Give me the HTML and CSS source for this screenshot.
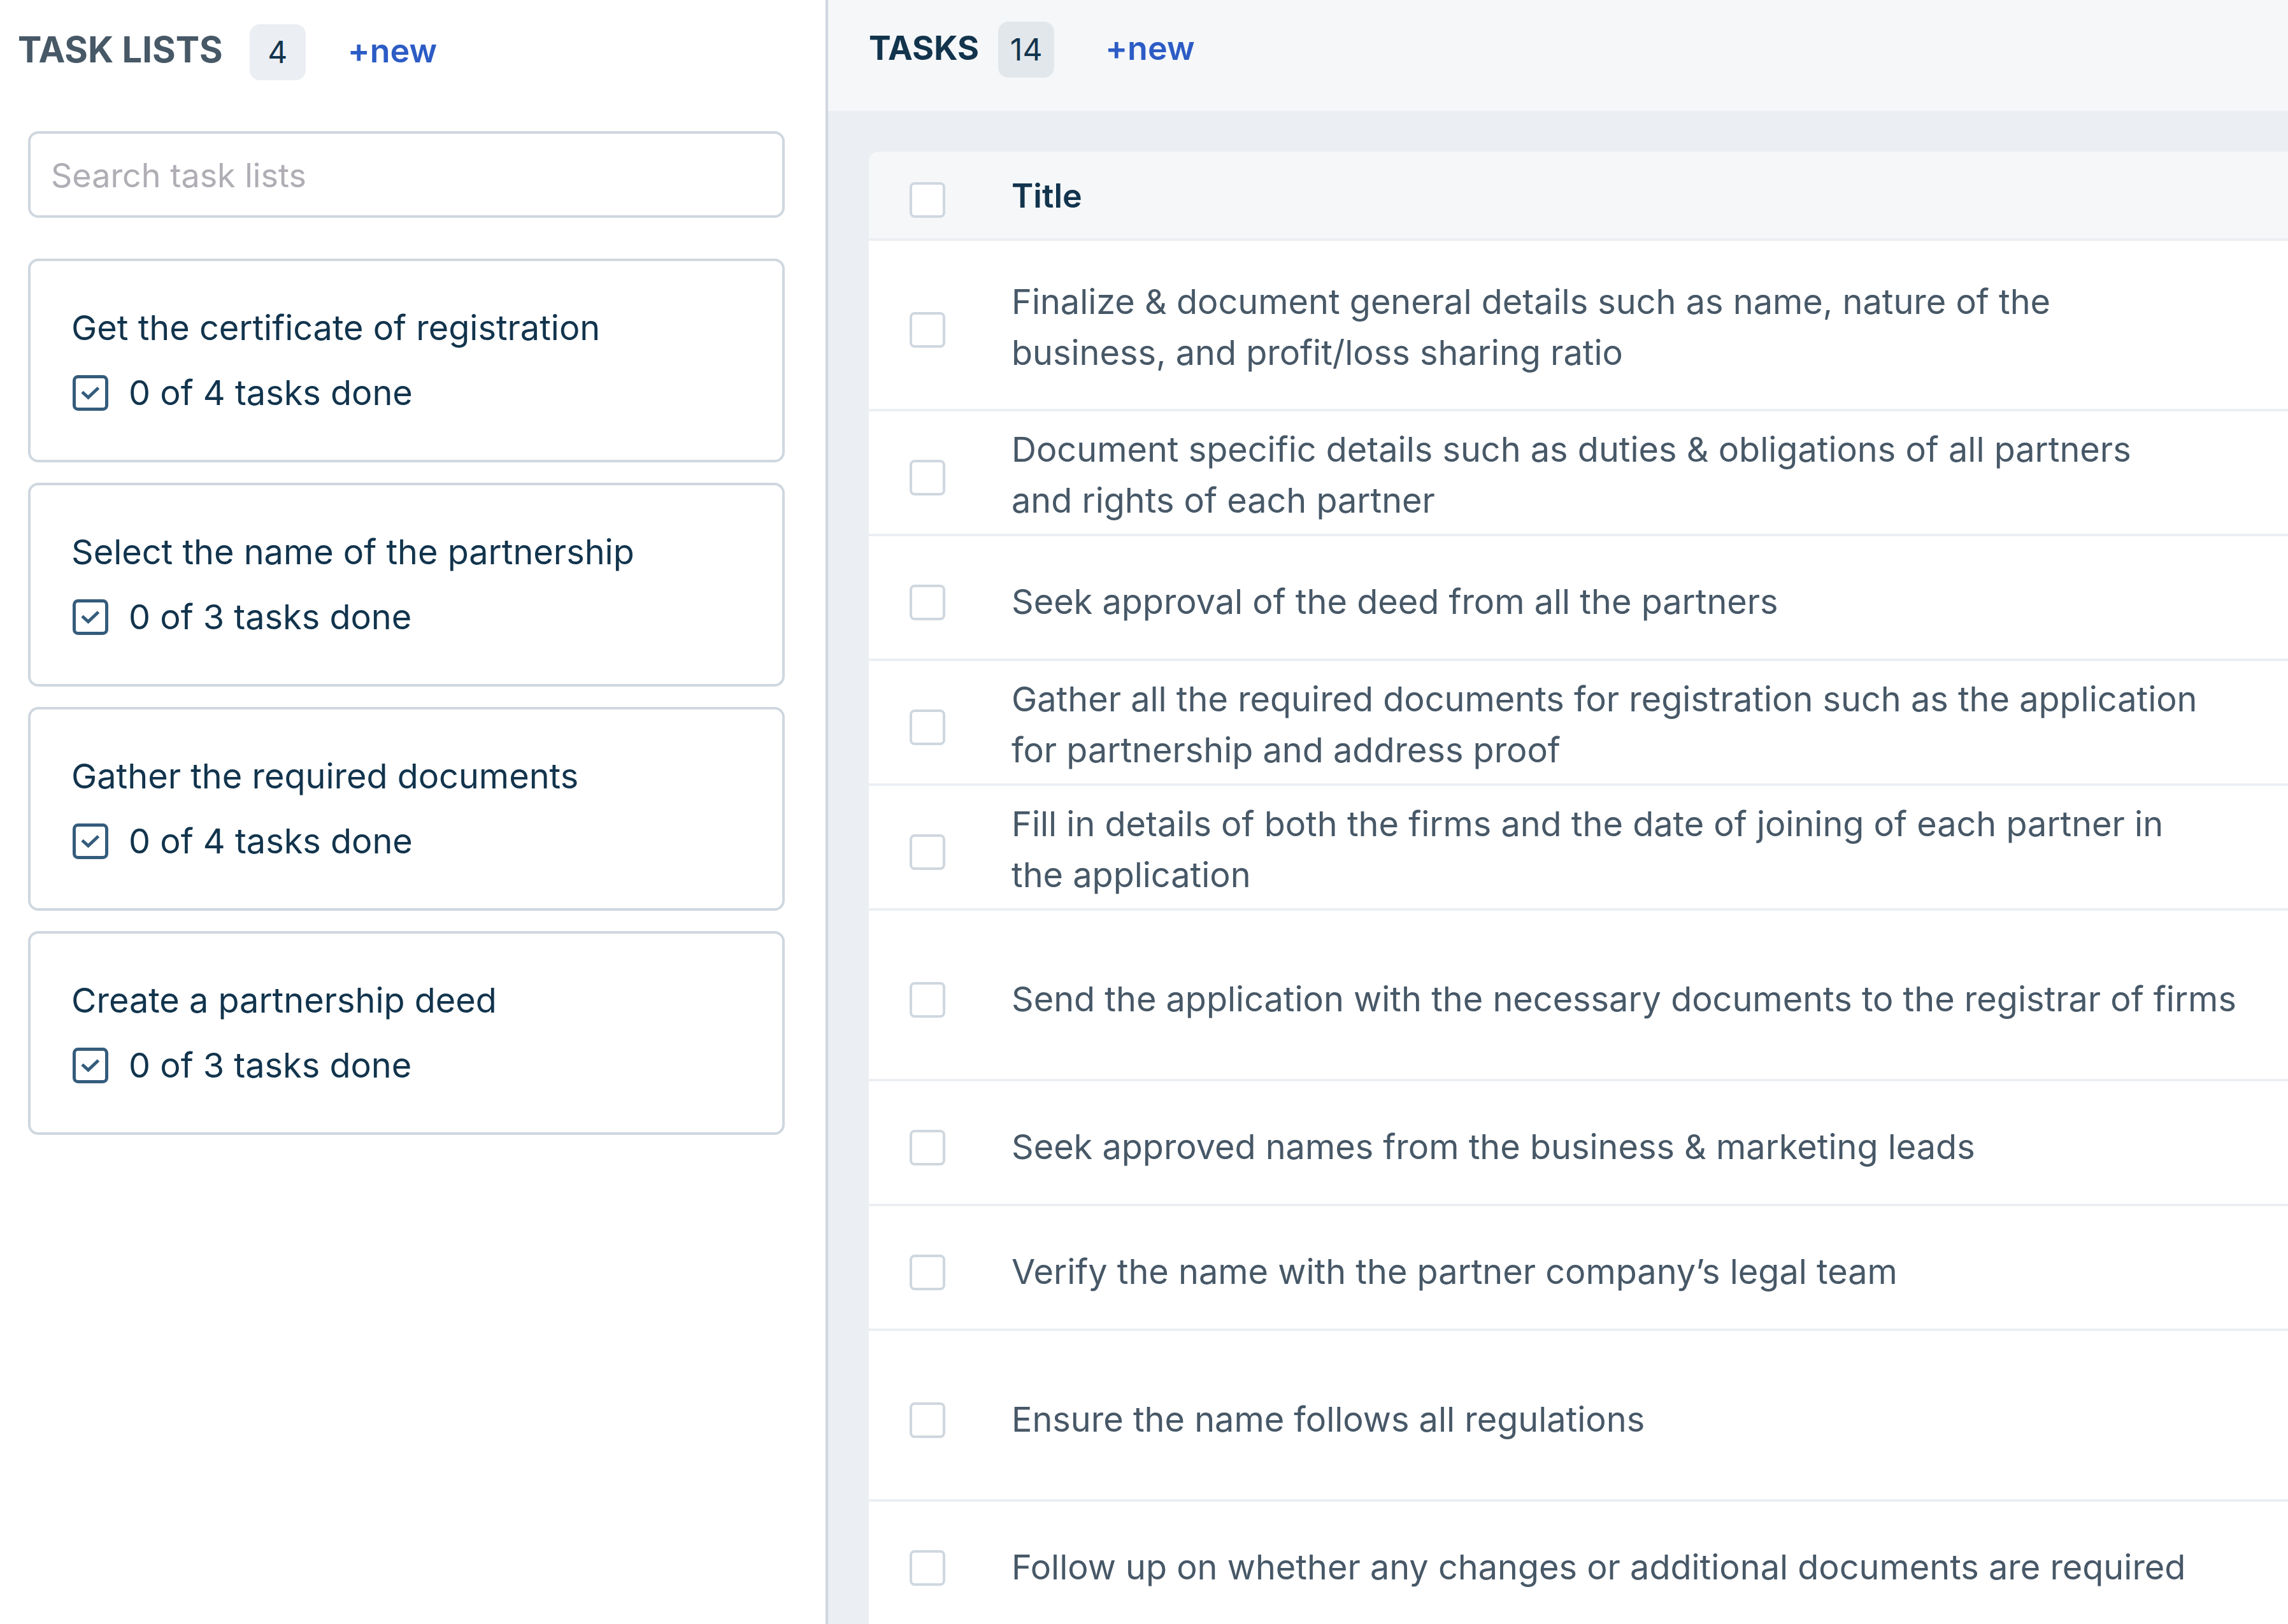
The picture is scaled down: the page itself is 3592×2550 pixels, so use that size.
FILE: index.html
```html
<!DOCTYPE html>
<html lang="en">
<head>
<meta charset="utf-8">
<title>Tasks</title>
<link rel="stylesheet" href="styles.css">
</head>
<body>
<svg class="sprite" aria-hidden="true">
  <symbol id="icon-check" viewBox="0 0 56 56">
    <rect x="2.5" y="2.5" width="51" height="51" rx="6" fill="none" stroke="currentColor" stroke-width="5"/>
    <path d="M15 26.500 L24.500 35 L40.500 20" fill="none" stroke="currentColor" stroke-width="5"/>
  </symbol>
</svg>
<div class="app">
  <aside class="sidebar">
    <header class="sidebar-header">
      <h2 class="heading">TASK LISTS</h2>
      <span class="badge">4</span>
      <button class="new-button" type="button">+new</button>
    </header>
    <input class="search" type="search" placeholder="Search task lists" aria-label="Search task lists">
    <ul class="lists">
      <li class="card">
        <h3 class="card-title">Get the certificate of registration</h3>
        <p class="progress"><svg class="icon"><use href="#icon-check"/></svg>0 of 4 tasks done</p>
      </li>
      <li class="card">
        <h3 class="card-title">Select the name of the partnership</h3>
        <p class="progress"><svg class="icon"><use href="#icon-check"/></svg>0 of 3 tasks done</p>
      </li>
      <li class="card">
        <h3 class="card-title">Gather the required documents</h3>
        <p class="progress"><svg class="icon"><use href="#icon-check"/></svg>0 of 4 tasks done</p>
      </li>
      <li class="card">
        <h3 class="card-title">Create a partnership deed</h3>
        <p class="progress"><svg class="icon"><use href="#icon-check"/></svg>0 of 3 tasks done</p>
      </li>
    </ul>
  </aside>
  <main class="main">
    <header class="main-header">
      <h1 class="heading heading-dark">TASKS</h1>
      <span class="badge badge-dark">14</span>
      <button class="new-button" type="button">+new</button>
    </header>
    <div class="content">
      <table class="tasks">
        <thead>
          <tr><th class="pick"><input class="box" type="checkbox" aria-label="Select all tasks"></th><th class="title">Title</th></tr>
        </thead>
        <tbody>
          <tr class="tall"><td class="pick"><input class="box" type="checkbox" id="t1"></td><td class="title two-line"><label for="t1">Finalize &amp; document general details such as name, nature of the<br>business, and profit/loss sharing ratio</label></td></tr>
          <tr><td class="pick"><input class="box" type="checkbox" id="t2"></td><td class="title two-line"><label for="t2">Document specific details such as duties &amp; obligations of all partners<br>and rights of each partner</label></td></tr>
          <tr><td class="pick"><input class="box" type="checkbox" id="t3"></td><td class="title"><label for="t3">Seek approval of the deed from all the partners</label></td></tr>
          <tr><td class="pick"><input class="box" type="checkbox" id="t4"></td><td class="title two-line"><label for="t4">Gather all the required documents for registration such as the application<br>for partnership and address proof</label></td></tr>
          <tr><td class="pick"><input class="box" type="checkbox" id="t5"></td><td class="title two-line"><label for="t5">Fill in details of both the firms and the date of joining of each partner in<br>the application</label></td></tr>
          <tr class="tall"><td class="pick"><input class="box" type="checkbox" id="t6"></td><td class="title"><label for="t6">Send the application with the necessary documents to the registrar of firms</label></td></tr>
          <tr><td class="pick"><input class="box" type="checkbox" id="t7"></td><td class="title"><label for="t7">Seek approved names from the business &amp; marketing leads</label></td></tr>
          <tr><td class="pick"><input class="box" type="checkbox" id="t8"></td><td class="title"><label for="t8">Verify the name with the partner company’s legal team</label></td></tr>
          <tr class="tall"><td class="pick"><input class="box" type="checkbox" id="t9"></td><td class="title"><label for="t9">Ensure the name follows all regulations</label></td></tr>
          <tr><td class="pick"><input class="box" type="checkbox" id="t10"></td><td class="title"><label for="t10">Follow up on whether any changes or additional documents are required</label></td></tr>
        </tbody>
      </table>
    </div>
  </main>
</div>
</body>
</html>
```

FILE: styles.css
```css
* {
  box-sizing: border-box;
}

body {
  margin: 0;
  background: #fff;
  color: #12344d;
  font-family: Inter, "Liberation Sans", sans-serif;
  font-size: 54px;
  line-height: 80px;
}

h1, h2, h3, p, ul {
  margin: 0;
  padding: 0;
}

.sprite {
  position: absolute;
  width: 0;
  height: 0;
}

.app {
  display: grid;
  grid-template-columns: 1300px minmax(0, 1fr);
  min-height: 100vh;
}

/* Task lists panel */
.sidebar {
  padding: 38px 64px 64px 44px;
  border-right: 4px solid #cfd7df;
}

.sidebar-header,
.main-header {
  display: flex;
  align-items: center;
}

.sidebar-header {
  margin: 0 0 80px -16px;
}

.heading {
  padding-bottom: 8px;
  color: #475867;
  font-size: 56px;
  font-weight: 700;
}

.heading-dark {
  padding-bottom: 4px;
  color: #12344d;
  font-size: 52px;
}

.badge {
  display: flex;
  align-items: center;
  justify-content: center;
  width: 88px;
  height: 88px;
  margin-left: 42px;
  border-radius: 16px;
  background: #ebeef2;
  font-size: 48px;
}

.badge-dark {
  margin-left: 30px;
  background: #e2e7eb;
}

.new-button {
  margin-left: 66px;
  padding: 0 0 4px;
  border: 0;
  background: none;
  color: #2c5cc5;
  font: inherit;
  font-size: 52px;
  font-weight: 600;
}

.main-header .new-button {
  margin-left: 80px;
}

.search {
  display: block;
  width: 100%;
  height: 136px;
  padding: 2px 32px 0;
  border: 4px solid #cfd7df;
  border-radius: 16px;
  background: #fff;
  color: inherit;
  font: inherit;
  font-size: 52px;
  appearance: none;
}

.search::placeholder {
  color: #b0adb5;
  opacity: 1;
}

.lists {
  display: flex;
  flex-direction: column;
  gap: 32px;
  margin-top: 64px;
  list-style: none;
}

.card {
  padding: 65px 64px;
  border: 4px solid #cfd7df;
  border-radius: 16px;
}

.card-title {
  font-size: 54px;
  font-weight: 400;
}

.progress {
  display: flex;
  align-items: center;
  gap: 32px;
  margin-top: 22px;
  padding-left: 2px;
}

.icon {
  flex: none;
  width: 56px;
  height: 56px;
  color: #345c7c;
}

/* Tasks panel */
.main {
  display: flex;
  flex-direction: column;
  background: #ebeef2;
}

.main-header {
  height: 174px;
  padding: 0 64px 18px;
  background: #f5f7f9;
}

.content {
  flex: 1;
  padding: 64px 0 0 64px;
}

.tasks {
  width: 100%;
  border-collapse: separate;
  border-spacing: 0;
  background: #fff;
  border-radius: 16px 0 0;
  overflow: hidden;
}

.tasks th,
.tasks td {
  height: 196px;
  padding: 0;
  border-bottom: 4px solid #ebeff3;
  text-align: left;
  vertical-align: middle;
}

.tasks th {
  height: 140px;
  background: #f5f7f9;
  font-size: 52px;
  font-weight: 600;
}

.tasks .pick {
  width: 224px;
  padding: 16px 0 0 64px;
}

.tasks .title {
  padding-top: 4px;
}

.tasks .tall td {
  height: 268px;
}

.tasks td.title {
  padding-top: 14px;
  color: #475867;
}

.tasks td.two-line {
  padding-top: 8px;
}

.box {
  display: block;
  width: 56px;
  height: 56px;
  margin: 0;
  border: 4px solid #cfd7df;
  border-radius: 8px;
  background: #fff;
  appearance: none;
}
```
